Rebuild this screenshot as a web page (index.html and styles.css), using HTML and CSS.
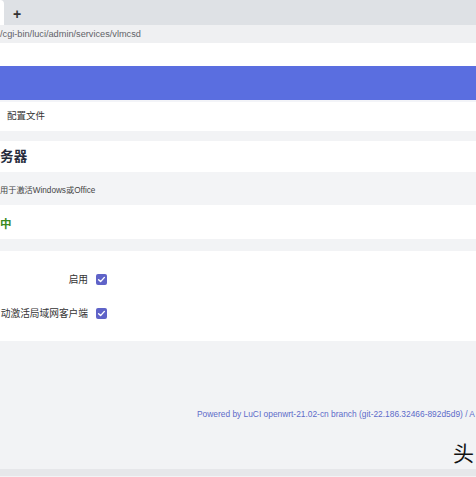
FILE: index.html
```html
<!DOCTYPE html>
<html lang="zh">
<head>
<meta charset="utf-8">
<link rel="stylesheet" href="styles.css">
</head>
<body>
<div class="tabbar">
  <div class="tab"></div>
  <div class="plus">+</div>
</div>
<div class="addr">/cgi-bin/luci/admin/services/vlmcsd</div>
<div class="spacer"></div>
<div class="navbar"></div>
<div class="gapline"></div>
<div class="tabs"><span>配置文件</span></div>
<div class="gap"></div>
<div class="title">务器</div>
<div class="desc">用于激活Windows或Office</div>
<div class="status">中</div>
<div class="gap gap-lg"></div>
<div class="form">
  <div class="row"><label>启用</label><span class="cb"><svg width="11" height="11" viewBox="0 0 11 11"><rect x="0" y="0" width="11" height="11" rx="2" fill="#5f63c8"/><path d="M2.6 5.7 L4.6 7.6 L8.4 3.4" fill="none" stroke="#fff" stroke-width="1.4" stroke-linecap="round" stroke-linejoin="round"/></svg></span></div>
  <div class="row"><label>动激活局域网客户端</label><span class="cb"><svg width="11" height="11" viewBox="0 0 11 11"><rect x="0" y="0" width="11" height="11" rx="2" fill="#5f63c8"/><path d="M2.6 5.7 L4.6 7.6 L8.4 3.4" fill="none" stroke="#fff" stroke-width="1.4" stroke-linecap="round" stroke-linejoin="round"/></svg></span></div>
</div>
<div class="bottom">
  <div class="footer">Powered by LuCI openwrt-21.02-cn branch (git-22.186.32466-892d5d9) / A</div>
  <div class="mark">头</div>
</div>
<div class="strip"></div>
</body>
</html>
```
FILE: styles.css
```css
html, body {
  margin: 0;
  padding: 0;
  width: 476px;
  height: 477px;
  overflow: hidden;
  font-family: "Liberation Sans", "Noto Sans CJK SC", sans-serif;
  background: #f2f3f5;
}
.tabbar {
  height: 25px;
  background: #dee1e5;
  display: flex;
  align-items: center;
}
.tab {
  width: 4px;
  height: 25px;
  background: #ffffff;
  border-top-right-radius: 4px;
  align-self: flex-end;
}
.plus {
  margin-left: 9px;
  font-size: 14px;
  font-weight: bold;
  color: #333;
  line-height: 14px;
  margin-top: 2px;
}
.addr {
  height: 18px;
  background: #eff0f2;
  font-size: 9.2px;
  color: #5f6368;
  line-height: 19px;
}
.spacer {
  height: 23px;
  background: #ffffff;
}
.navbar {
  height: 34px;
  background: #5a6ee0;
}
.gapline {
  height: 2px;
  background: #f3f4f8;
}
.tabs {
  height: 29px;
  background: #ffffff;
  display: flex;
  align-items: center;
  padding-left: 7px;
  padding-bottom: 3px;
  box-sizing: border-box;
  font-size: 9.5px;
  color: #333;
}
.gap {
  height: 10px;
  background: #f2f3f5;
}
.gap-lg {
  height: 12px;
}
.title {
  height: 31px;
  background: #ffffff;
  font-size: 13.5px;
  font-weight: bold;
  color: #262b3c;
  line-height: 31px;
  letter-spacing: 0.3px;
}
.desc {
  height: 33px;
  background: #f3f4f6;
  font-size: 8.2px;
  color: #444;
  line-height: 38px;
}
.status {
  height: 34px;
  background: #ffffff;
  font-size: 11.5px;
  font-weight: bold;
  color: #3a8a22;
  line-height: 38px;
}
.form {
  height: 90px;
  background: #ffffff;
  display: flex;
  flex-direction: column;
  padding-top: 22px;
  box-sizing: border-box;
  gap: 22px;
}
.row {
  display: flex;
  align-items: center;
  height: 12px;
}
.row label {
  width: 88px;
  text-align: right;
  font-size: 9.7px;
  color: #333;
  white-space: nowrap;
}
.cb {
  margin-left: 8px;
  display: flex;
}
.bottom {
  height: 128px;
  background: #f2f3f5;
  position: relative;
}
.footer {
  position: absolute;
  left: 197px;
  top: 68px;
  font-size: 8.4px;
  color: #5d6bc9;
  white-space: nowrap;
}
.mark {
  position: absolute;
  left: 453px;
  top: 101px;
  font-size: 21px;
  color: #111;
  font-family: "Noto Sans CJK SC", sans-serif;
  line-height: 1;
}
.strip {
  height: 7px;
  background: #e6e7ea;
}
```
